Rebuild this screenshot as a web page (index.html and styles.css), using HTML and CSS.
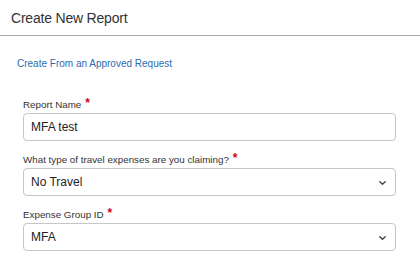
FILE: index.html
```html
<!DOCTYPE html>
<html lang="en">
<head>
    <meta charset="UTF-8">
    <meta name="viewport" content="width=device-width, initial-scale=1.0">
    <title>Create New Report</title>
    <link rel="stylesheet" href="styles.css">
</head>
<body>
    <div class="header">
        <h1>Create New Report</h1>
    </div>

    <div class="links">
        <a href="#" class="approved-link">Create From an Approved Request</a>
    </div>

    <form class="report-form">
        <div class="field">
            <label for="reportName">Report Name<span class="required">*</span></label>
            <input type="text" id="reportName" value="MFA test">
        </div>
        <div class="field">
            <label for="travelType">What type of travel expenses are you claiming?<span class="required">*</span></label>
            <div class="select-wrap">
                <select id="travelType">
                    <option>No Travel</option>
                    <option>Domestic Travel</option>
                    <option>International Travel</option>
                </select>
                <svg class="chevron" width="7" height="4" viewBox="0 0 7 4"><path d="M0.8 0.8 L3.5 3.2 L6.2 0.8" fill="none" stroke="#444" stroke-width="1.4" stroke-linecap="round" stroke-linejoin="round"/></svg>
            </div>
        </div>
        <div class="field">
            <label for="groupId">Expense Group ID<span class="required">*</span></label>
            <div class="select-wrap">
                <select id="groupId">
                    <option>MFA</option>
                </select>
                <svg class="chevron" width="7" height="4" viewBox="0 0 7 4"><path d="M0.8 0.8 L3.5 3.2 L6.2 0.8" fill="none" stroke="#444" stroke-width="1.4" stroke-linecap="round" stroke-linejoin="round"/></svg>
            </div>
        </div>
    </form>
</body>
</html>
```

FILE: styles.css
```css
body {
    margin: 0;
    font-family: "Liberation Sans", Arial, sans-serif;
    color: #333;
    background: #fff;
}
.header {
    height: 35px;
    display: flex;
    align-items: center;
    padding-left: 11px;
    border-bottom: 1px solid #a8a8a8;
}
h1 {
    margin: 0;
    font-size: 14px;
    font-weight: normal;
    letter-spacing: -0.2px;
    color: #333;
}
.links {
    padding: 20px 17px 0;
    line-height: 12px;
}
.approved-link {
    font-size: 10px;
    color: #2b6cb0;
    text-decoration: none;
}
.report-form {
    padding: 27px 24px 0 23px;
}
.field {
    margin-bottom: 11px;
}
.field label {
    display: block;
    font-size: 9.8px;
    line-height: 13px;
    color: #333;
    margin-bottom: 2px;
}
.required {
    color: #d0021b;
    font-size: 12px;
    font-weight: bold;
    margin-left: 4px;
    vertical-align: 1px;
}
input[type="text"], select {
    display: block;
    width: 100%;
    box-sizing: border-box;
    height: 28px;
    padding: 0 7px;
    border: 1px solid #c6c6c6;
    border-radius: 4px;
    font-family: inherit;
    font-size: 12px;
    color: #222;
    background: #fff;
}
select {
    appearance: none;
    -webkit-appearance: none;
}
.select-wrap {
    position: relative;
}
.chevron {
    position: absolute;
    right: 10px;
    top: 13px;
    pointer-events: none;
}
```
